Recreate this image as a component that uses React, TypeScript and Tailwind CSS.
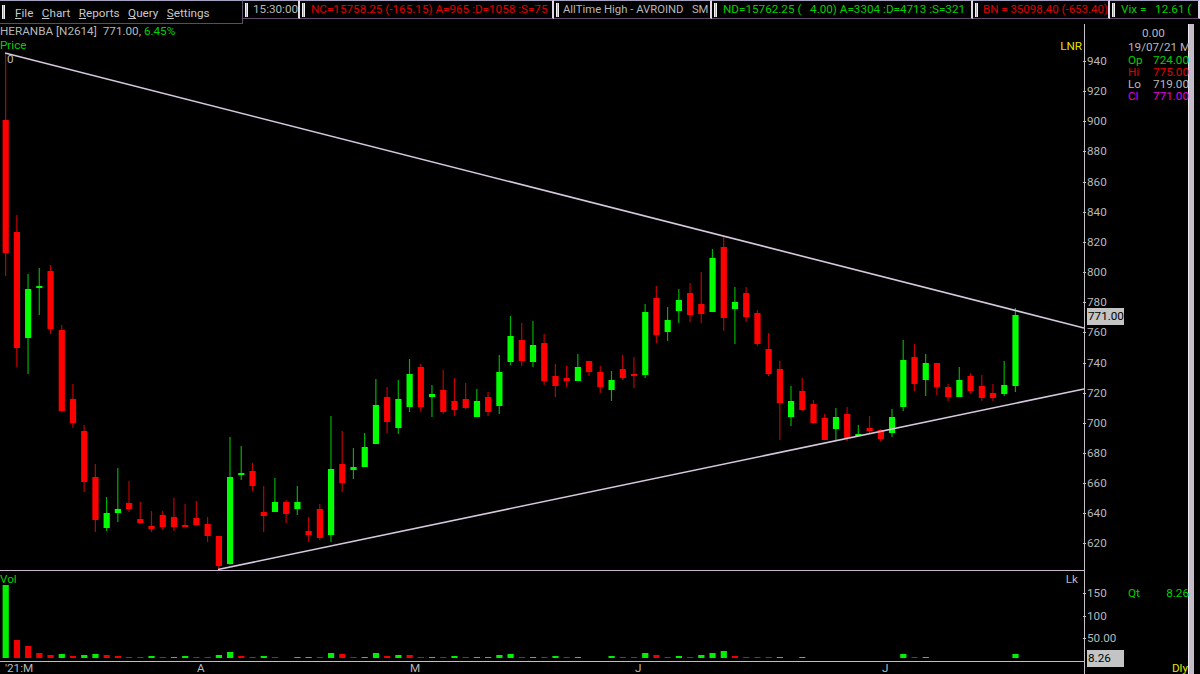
const FONT = "font-['Roboto',sans-serif]";

// [high, bodyTop, bodyBottom, low, isGreen] in chart pixels
const candles: [number, number, number, number, number][] = [
  [53,120,253,276,0],[215,232,348,367,0],[274,289,338,374,1],[268,286,288,315,1],[265,271,329,334,0],[325,330,411,412,0],
  [384,399,423,428,0],[425,431,482,492,0],[464,477,520,532,0],[497,513,528,531,1],[468,509,513,522,1],[481,503,509,512,0],
  [502,519,523,524,0],[511,526,529,532,0],[511,515,527,530,0],[498,517,527,531,0],[504,525,527,527,0],[501,518,525,526,0],
  [517,524,536,542,0],[536,536,566,569,0],[437,477,564,565,1],[446,473,475,480,1],[463,471,486,491,0],[486,512,516,532,0],
  [478,502,512,512,1],[500,502,514,523,0],[486,502,509,515,1],[517,531,535,542,0],[504,509,538,540,0],[416,469,535,542,1],
  [431,464,483,492,0],[448,467,470,479,1],[433,447,467,467,1],[379,405,444,444,1],[387,397,422,433,0],[380,399,428,434,1],
  [359,374,407,412,1],[364,367,407,412,0],[385,394,397,417,1],[370,390,412,414,0],[378,401,410,416,0],[383,399,408,409,0],
  [389,401,417,417,1],[392,397,412,416,0],[355,372,406,414,1],[316,336,362,365,1],[323,340,361,366,0],[321,345,362,367,1],
  [334,343,381,385,0],[364,376,386,397,0],[366,378,381,387,0],[354,367,381,381,1],[361,361,372,376,0],[366,372,387,393,0],
  [371,380,390,401,1],[355,369,378,380,0],[357,374,376,388,0],[304,312,375,378,1],[286,298,335,343,0],[307,320,332,341,1],
  [289,300,311,323,1],[283,293,315,322,0],[272,304,314,323,0],[249,258,312,312,1],[237,247,318,331,0],[287,302,309,344,1],
  [287,293,317,322,0],[310,313,344,346,0],[333,349,374,376,0],[361,369,403,440,0],[386,401,417,426,1],[378,391,410,411,0],
  [400,404,423,424,0],[414,418,440,440,0],[408,417,429,440,1],[407,414,438,441,0],[425,434,436,436,1],[416,428,431,433,0],
  [429,430,439,442,0],[409,417,433,437,1],[340,360,407,411,1],[344,357,384,391,0],[354,363,380,396,1],[363,363,387,395,0],
  [384,387,397,401,0],[367,380,397,397,1],[373,376,391,394,0],[375,386,398,401,0],[384,393,398,401,0],[361,385,394,396,1],
  [308,315,386,392,1],
];

// [candle index, bar height, isGreen]
const volumes: [number, number, number][] = [
  [0,73,1],[1,18,0],[2,12,0],[3,5,0],[4,3,0],[5,4,1],[6,2,0],[7,3,1],[8,4,1],[9,3,0],[10,2,0],[11,1,0],[12,1,0],[13,2,1],
  [14,1,0],[15,1,1],[16,2,1],[17,1,0],[18,1,0],[19,3,1],[20,6,1],[21,2,0],[22,1,0],[23,2,1],[24,1,0],[26,1,1],[27,1,1],
  [28,1,0],[29,5,1],[30,4,0],[31,1,0],[32,1,1],[33,5,1],[34,2,0],[35,3,1],[36,3,0],[37,1,0],[38,1,1],[39,1,0],[40,2,1],
  [41,1,0],[42,1,1],[43,1,1],[44,3,1],[45,4,1],[46,1,0],[47,1,1],[48,1,0],[49,2,1],[50,1,0],[51,1,1],[54,2,1],[55,1,0],
  [56,1,0],[57,5,1],[58,3,0],[59,1,0],[60,2,1],[61,1,0],[62,3,1],[63,5,1],[64,7,1],[65,2,0],[66,1,0],[67,1,0],[68,1,0],
  [69,1,1],[71,1,1],[80,4,1],[81,1,0],[82,1,1],[90,4,1],
];

const cx = (i: number) => 5.6 + i * 11.22;
const priceLabels = [940,920,900,880,860,840,820,800,780,760,740,720,700,680,660,640,620];
const volLabels: [string, number][] = [["150",593],["100",616],["50.00",638]];

function Grip({ tint = "bg-[#b0a8b8]" }: { tint?: string }) {
  return <span className={`w-[3px] h-[14px] shrink-0 ${tint} border-x border-[#f0f0f0]`} />;
}

function Seg({ w, text, cls = "text-[#b8b8b8]", gap = "gap-[6px]" }: { w: string; text: string; cls?: string; gap?: string }) {
  return (
    <div className={`${w} h-[19px] shrink-0 flex items-center ${gap} pl-[2px] border-t border-[#a8a0c0] border-b border-b-[#604868] border-r-2 border-r-[#e0d8e8] overflow-hidden whitespace-pre ${cls}`}>
      <Grip />
      {text}
    </div>
  );
}

function Menu({ label, rest }: { label: string; rest: string }) {
  return <span><span className="underline">{label}</span>{rest}</span>;
}

function PriceChart() {
  return (
    <svg className="absolute inset-0" width="1084" height="546" viewBox="0 24 1084 546">
      {candles.map(([hi, top, bot, lo, g], i) => {
        const x = cx(i);
        const body = g ? "#00ff00" : "#ff0000";
        const wick = g ? "#00b000" : "#c00000";
        return (
          <g key={i}>
            <line x1={x} x2={x} y1={hi} y2={lo} stroke={wick} strokeWidth="1.2" />
            <rect x={x - 3} y={top} width="6.2" height={Math.max(bot - top, 1.4)} fill={body} />
          </g>
        );
      })}
      <line x1="5" y1="53" x2="1084" y2="328" stroke="#d6c8de" strokeWidth="1.6" />
      <line x1="218" y1="569.5" x2="1084" y2="389" stroke="#d6c8de" strokeWidth="1.6" />
    </svg>
  );
}

function VolumeChart() {
  return (
    <svg className="absolute inset-0" width="1084" height="90" viewBox="0 572 1084 90">
      {volumes.map(([i, h, g]) => (
        <rect key={i} x={cx(i) - 3} y={659 - h} width="6.2" height={h} fill={g ? "#00f000" : "#f00000"} />
      ))}
    </svg>
  );
}

export default function App() {
  return (
    <div className={`w-[1200px] h-[674px] bg-black flex flex-col overflow-hidden text-[11.7px] leading-[13px] text-[#b8b8b8] ${FONT}`}>
      <header className="h-[24px] shrink-0 flex items-start">
        <div className="w-[243px] h-[24px] shrink-0 flex items-center pl-[2px] border-t border-[#a8a0c0] border-b border-b-[#604868] border-r border-r-[#605068]">
          <Grip />
          <nav className="flex ml-[10px] gap-[8.5px] pt-[3px] text-[#c8c8c8]">
            <Menu label="F" rest="ile" />
            <Menu label="C" rest="hart" />
            <Menu label="R" rest="eports" />
            <Menu label="Q" rest="uery" />
            <Menu label="S" rest="ettings" />
          </nav>
        </div>
        <Seg w="w-[57px]" text="15:30:00" gap="gap-[5px]" />
        <Seg w="w-[254px]" text="NC=15758.25 (-165.15) A=965 :D=1058 :S=75" cls="text-[#e00000]" />
        <Seg w="w-[158px]" text="AllTime High - AVROIND   SM" gap="gap-[4px]" cls="text-[#b8b8b8] text-[11.3px]" />
        <Seg w="w-[261px]" text="ND=15762.25 (   4.00) A=3304 :D=4713 :S=321" cls="text-[#00d000]" />
        <Seg w="w-[137px]" text="BN = 35098.40 (-653.40)" gap="gap-[5px]" cls="text-[#e00000] text-[11.5px]" />
        <Seg w="w-[90px]" text="Vix =   12.61 (" cls="text-[#00d000]" />
      </header>

      <main className="flex-1 flex min-h-0">
        <section className="w-[1084px] shrink-0 flex flex-col">
          <div className="relative h-[547px] border-b border-[#c8b8cc]">
            <PriceChart />
            <div className="relative flex gap-[6px] pt-[1px]">
              <span>HERANBA [N2614]</span>
              <span>771.00, <span className="text-[#00d000]">6.45%</span></span>
            </div>
            <div className="relative text-[#00d000] mt-[1px]">Price</div>
            <div className="relative pl-[7px] mt-[1px]">0</div>
            <span className="absolute right-[2px] top-[16px] text-[#e0e000]">LNR</span>
          </div>
          <div className="relative h-[91px] border-b border-[#c8b8cc]">
            <VolumeChart />
            <div className="relative text-[#00d000] pt-[2px]">Vol</div>
            <span className="absolute right-[6px] top-[2px]">Lk</span>
          </div>
          <div className="relative flex-1 leading-[12px]">
            <span className="absolute left-[5px] top-0">'21:M</span>
            <span className="absolute left-[197px] top-0">A</span>
            <span className="absolute left-[410px] top-0">M</span>
            <span className="absolute left-[635px] top-0">J</span>
            <span className="absolute left-[882px] top-0">J</span>
          </div>
        </section>

        <section className="relative w-[104px] shrink-0 border-l border-[#c8c0c8]">
          {priceLabels.map((p, i) => {
            const y = 61.5 + i * 30.15 - 24;
            return (
              <div key={p} className="absolute left-[-2px] flex items-center gap-[1px] h-[14px]" style={{ top: y - 7 }}>
                <span className="w-[3px] h-px bg-[#c8c0c8]" />
                {p}
              </div>
            );
          })}
          {volLabels.map(([t, y]) => (
            <div key={t} className="absolute left-[-2px] flex items-center gap-[1px] h-[14px]" style={{ top: y - 24 - 7 }}>
              <span className="w-[3px] h-px bg-[#c8c0c8]" />
              {t}
            </div>
          ))}
          <div className="absolute left-[2px] top-[284px] w-[37px] h-[17px] bg-[#c4c4c4] text-black pl-px leading-[17px]">771.00</div>
          <div className="absolute left-[2px] top-[626px] w-[37px] h-[17px] bg-[#c4c4c4] text-black pl-px leading-[17px]">8.26</div>

          <aside className="absolute left-[43px] top-[2px] w-[61px] h-[648px] overflow-hidden whitespace-nowrap leading-[12px]">
            <div className="pl-[14px] mt-[1px] mb-[2px]">0.00</div>
            <div className="h-[12px] mb-[1px]">19/07/21 Mon</div>
            <div className="flex justify-between text-[#00d000] h-[12px]"><span>Op</span><span>724.00</span></div>
            <div className="flex justify-between text-[#e00000] h-[12px]"><span>Hi</span><span>775.00</span></div>
            <div className="flex justify-between h-[12px]"><span>Lo</span><span>719.00</span></div>
            <div className="flex justify-between text-[#e000e0] h-[12px]"><span>Cl</span><span>771.00</span></div>
            <div className="flex justify-between text-[#00d000] mt-[485px]"><span>Qt</span><span>8.26</span></div>
            <div className="text-right text-[#e0e000] mt-[63px] pr-[1px]">Dly</div>
          </aside>
        </section>

        <div className="w-[6px] shrink-0 bg-[#c4bcc8] border-l border-[#f0e8f0]" />
        <div className="flex-1 bg-black" />
      </main>
    </div>
  );
}
